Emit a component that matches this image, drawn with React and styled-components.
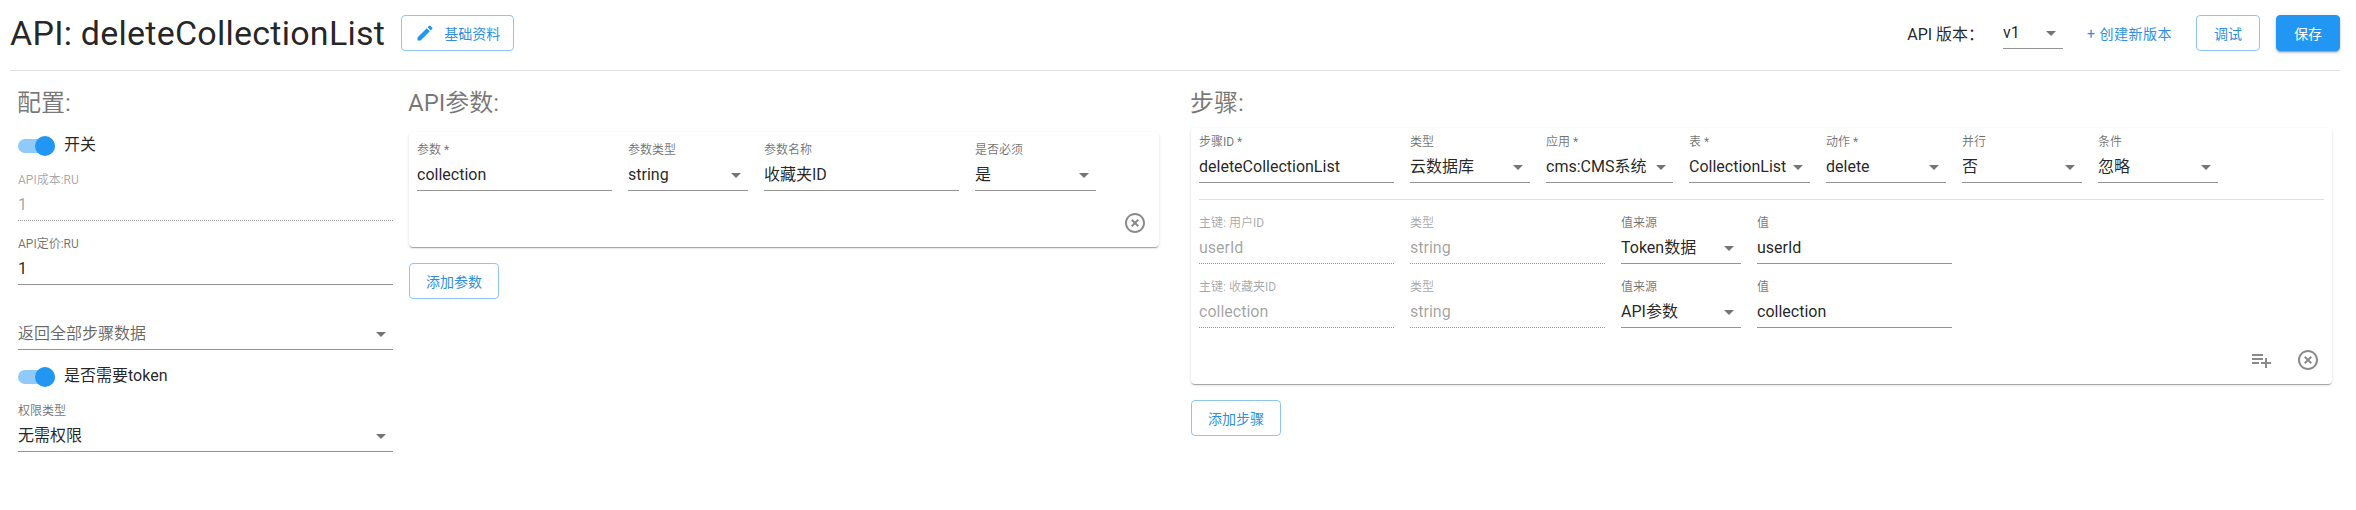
import React from 'react';
import styled, { createGlobalStyle } from 'styled-components';
import { MdEdit, MdHighlightOff, MdPlaylistAdd, MdArrowDropDown } from 'react-icons/md';

const GlobalStyle = createGlobalStyle`
  html, body {
    margin: 0;
    background: #fff;
    font-family: Roboto, "Noto Sans CJK SC", sans-serif;
    color: rgba(0, 0, 0, 0.87);
  }
  * { box-sizing: border-box; }
`;

const Page = styled.div`
  width: 2356px;
  padding: 0 16px 0 10px;
`;

const Header = styled.header`
  height: 71px;
  border-bottom: 1px solid rgba(0, 0, 0, 0.12);
  display: flex;
  align-items: center;
  justify-content: space-between;
  padding-bottom: 5px;
`;

const HeaderGroup = styled.div`
  display: flex;
  align-items: center;
`;

const PageTitle = styled.h1`
  margin: 0 16px 0 0;
  font-size: 34px;
  line-height: 40px;
  font-weight: 400;
  letter-spacing: 0.25px;
`;

const VersionLabel = styled.span`
  font-size: 16px;
  margin-right: 19px;
`;

const Btn = styled.button`
  height: 36px;
  width: ${(p) => p.$width}px;
  border-radius: 4px;
  border: 1px solid ${(p) => (p.$primary ? '#2196f3' : '#8ec5f2')};
  background: ${(p) => (p.$primary ? '#2196f3' : '#fff')};
  color: ${(p) => (p.$primary ? '#fff' : '#2f8fe0')};
  box-shadow: ${(p) =>
    p.$primary
      ? '0 3px 1px -2px rgba(0,0,0,.2), 0 2px 2px 0 rgba(0,0,0,.14), 0 1px 5px 0 rgba(0,0,0,.12)'
      : 'none'};
  font-family: inherit;
  font-size: 14px;
  padding: 0;
  margin-left: ${(p) => p.$ml || 0}px;
  margin-top: ${(p) => p.$mt || 0}px;
  display: flex;
  align-items: center;
  justify-content: center;
  gap: 9px;
  cursor: pointer;
`;

const EditIcon = styled(MdEdit)`
  color: #2196f3;
  font-size: 20px;
`;

const TextLink = styled.span`
  color: #2f8fe0;
  font-size: 14px;
  letter-spacing: 0.5px;
  margin: 0 24px;
`;

const Main = styled.main`
  display: flex;
  align-items: flex-start;
  padding-top: 16px;
`;

const Column = styled.section`
  width: ${(p) => p.$width}px;
  margin-left: ${(p) => p.$ml}px;
  display: flex;
  flex-direction: column;
  align-items: flex-start;
`;

const SectionTitle = styled.h2`
  margin: 0 0 0 -1px;
  font-size: 24px;
  line-height: 32px;
  font-weight: 400;
  color: rgba(0, 0, 0, 0.54);
`;

const ToggleRow = styled.div`
  display: flex;
  align-items: center;
  height: 24px;
  margin-top: ${(p) => p.$mt}px;
  font-size: 16px;
  gap: 9px;
`;

const ToggleText = styled.span`
  line-height: 24px;
  padding-bottom: 2px;
`;

const Track = styled.span`
  position: relative;
  display: block;
  width: 37px;
  height: 14px;
  border-radius: 7px;
  background: rgba(33, 150, 243, 0.5);
`;

const Thumb = styled.span`
  position: absolute;
  right: 0;
  top: -3px;
  width: 20px;
  height: 20px;
  border-radius: 50%;
  background: #2196f3;
`;

const FieldBox = styled.div`
  width: ${(p) => p.$width}px;
  flex: none;
  margin-top: ${(p) => p.$mt || 0}px;
`;

const FieldLabel = styled.div`
  font-size: 12px;
  line-height: 16px;
  height: 16px;
  white-space: nowrap;
  color: rgba(0, 0, 0, ${(p) => (p.$disabled ? 0.36 : 0.56)});
`;

const FieldValue = styled.div`
  display: flex;
  align-items: center;
  justify-content: space-between;
  box-sizing: content-box;
  height: 24px;
  padding: 5px 0 3px;
  font-size: 16px;
  line-height: 24px;
  white-space: nowrap;
  overflow: hidden;
  color: rgba(0, 0, 0, ${(p) => (p.$disabled ? 0.38 : p.$muted ? 0.6 : 0.87)});
  border-bottom: 1px ${(p) => (p.$disabled ? 'dotted' : 'solid')} rgba(0, 0, 0, 0.42);
`;

const Arrow = styled(MdArrowDropDown)`
  flex: none;
  font-size: 24px;
  color: rgba(0, 0, 0, 0.54);
`;

const Field = ({ label, value, width, mt, select, disabled, muted, required }) => (
  <FieldBox $width={width} $mt={mt}>
    {label && (
      <FieldLabel $disabled={disabled}>
        {label}
        {required ? ' *' : ''}
      </FieldLabel>
    )}
    <FieldValue $disabled={disabled} $muted={muted}>
      {value}
      {select && <Arrow />}
    </FieldValue>
  </FieldBox>
);

const Card = styled.div`
  width: 100%;
  border-radius: 4px;
  background: #fff;
  padding: ${(p) => p.$pt}px 8px 12px;
  box-shadow: 0 2px 1px -1px rgba(0, 0, 0, 0.2), 0 1px 1px 0 rgba(0, 0, 0, 0.14),
    0 1px 3px 0 rgba(0, 0, 0, 0.12);
  margin-top: ${(p) => p.$mt}px;
`;

const Row = styled.div`
  display: flex;
  gap: 16px;
  margin-top: ${(p) => p.$mt || 0}px;
`;

const Rule = styled.hr`
  margin: 16px 0 15px;
  border: 0;
  border-top: 1px solid rgba(0, 0, 0, 0.12);
`;

const CardActions = styled.div`
  display: flex;
  justify-content: flex-end;
  gap: 23px;
  margin-top: ${(p) => p.$mt}px;
  padding-right: 4px;
`;

const IconBtn = styled.span`
  display: flex;
  font-size: 24px;
  color: rgba(0, 0, 0, 0.46);
`;

export default function App() {
  return (
    <Page>
      <GlobalStyle />
      <Header>
        <HeaderGroup>
          <PageTitle>API: deleteCollectionList</PageTitle>
          <Btn $width={113}>
            <EditIcon />
            基础资料
          </Btn>
        </HeaderGroup>
        <HeaderGroup>
          <VersionLabel>API 版本：</VersionLabel>
          <Field width={60} value="v1" select />
          <TextLink>+ 创建新版本</TextLink>
          <Btn $width={64}>调试</Btn>
          <Btn $width={64} $primary $ml={16}>
            保存
          </Btn>
        </HeaderGroup>
      </Header>
      <Main>
        <Column $width={375} $ml={8}>
          <SectionTitle>配置:</SectionTitle>
          <ToggleRow $mt={15}>
            <Track>
              <Thumb />
            </Track>
            <ToggleText>开关</ToggleText>
          </ToggleRow>
          <Field width={375} mt={14} label="API成本:RU" value="1" disabled />
          <Field width={375} mt={15} label="API定价:RU" value="1" />
          <Field width={375} mt={32} value="返回全部步骤数据" select muted />
          <ToggleRow $mt={15}>
            <Track>
              <Thumb />
            </Track>
            <ToggleText>是否需要token</ToggleText>
          </ToggleRow>
          <Field width={375} mt={14} label="权限类型" value="无需权限" select />
        </Column>

        <Column $width={750} $ml={16}>
          <SectionTitle>API参数:</SectionTitle>
          <Card $mt={13} $pt={10}>
            <Row>
              <Field width={195} label="参数" value="collection" required />
              <Field width={120} label="参数类型" value="string" select />
              <Field width={195} label="参数名称" value="收藏夹ID" />
              <Field width={121} label="是否必须" value="是" select />
            </Row>
            <CardActions $mt={20}>
              <IconBtn>
                <MdHighlightOff />
              </IconBtn>
            </CardActions>
          </Card>
          <Btn $width={90} $mt={16}>
            添加参数
          </Btn>
        </Column>

        <Column $width={1141} $ml={32}>
          <SectionTitle>步骤:</SectionTitle>
          <Card $mt={9} $pt={6}>
            <Row>
              <Field width={195} label="步骤ID" value="deleteCollectionList" required />
              <Field width={120} label="类型" value="云数据库" select />
              <Field width={127} label="应用" value="cms:CMS系统" select required />
              <Field width={121} label="表" value="CollectionList" select required />
              <Field width={120} label="动作" value="delete" select required />
              <Field width={120} label="并行" value="否" select />
              <Field width={120} label="条件" value="忽略" select />
            </Row>
            <Rule />
            <Row>
              <Field width={195} label="主键: 用户ID" value="userId" disabled />
              <Field width={195} label="类型" value="string" disabled />
              <Field width={120} label="值来源" value="Token数据" select />
              <Field width={195} label="值" value="userId" />
            </Row>
            <Row $mt={15}>
              <Field width={195} label="主键: 收藏夹ID" value="collection" disabled />
              <Field width={195} label="类型" value="string" disabled />
              <Field width={120} label="值来源" value="API参数" select />
              <Field width={195} label="值" value="collection" />
            </Row>
            <CardActions $mt={20}>
              <IconBtn>
                <MdPlaylistAdd />
              </IconBtn>
              <IconBtn>
                <MdHighlightOff />
              </IconBtn>
            </CardActions>
          </Card>
          <Btn $width={90} $mt={16}>
            添加步骤
          </Btn>
        </Column>
      </Main>
    </Page>
  );
}
